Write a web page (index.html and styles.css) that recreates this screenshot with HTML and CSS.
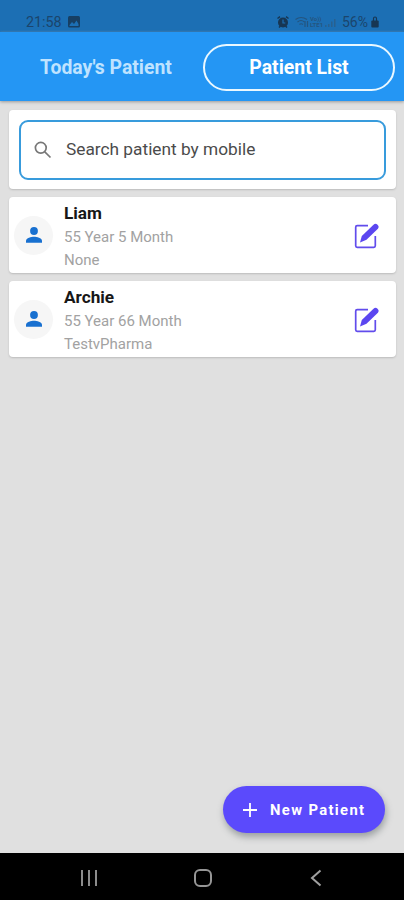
FILE: index.html
```html
<!DOCTYPE html>
<html lang="en">
<head>
<meta charset="utf-8">
<meta name="viewport" content="width=device-width">
<title>Patient List</title>
<link rel="stylesheet" href="styles.css">
</head>
<body>
<div class="status">
  <span class="time">21:58</span>
  <svg class="photo" width="12" height="12" viewBox="0 0 12 12"><rect width="12" height="11.5" rx="1.5" fill="#173f63"/><path d="M1.5 9 4 6l2 2 2.500-3.500L10.500 8v2h-9z" fill="#1c6fb4"/></svg>
  <span class="gap"></span>
  <svg class="alarm" width="12" height="12" viewBox="0 0 12 12"><circle cx="6" cy="6.500" r="5" fill="#173653"/><path d="M.5 2.500 3 .7M11.500 2.500 9 .7M2 11.500l1.500-1.500M10 11.500 8.500 10" stroke="#173653" stroke-width="1.500"/><path d="M6 3.500V7h2.300" fill="none" stroke="#1c6fb4" stroke-width="1.200"/></svg>
  <svg class="wifi" width="14" height="12" viewBox="0 0 14 12" fill="none" stroke="#24557f" stroke-width="1.200"><path d="M.5 3.500Q6 -.5 12 3.500M2.500 6Q6 3 9.500 6M4.500 8.500Q6 7 8 8.500"/><path d="M10 5v6M12.500 11V5"/></svg>
  <span class="volte"><span>Vo))</span><span>LTE1</span></span>
  <svg class="signal" width="13" height="12" viewBox="0 0 13 12" fill="#28618f"><path d="M0 9h1.500v2H0zM3 8h1.500v3H3zM6 5.500h1.500V11H6zM9 3h1.500v8H9z"/></svg>
  <span class="percent">56%</span>
  <svg class="battery" width="8" height="12" viewBox="0 0 8 12"><path d="M2.500 5V2.500a1.500 1.500 0 0 1 3 0V5" fill="none" stroke="#173653" stroke-width="1.200"/><rect x=".3" y="4.500" width="7.400" height="7" rx="1" fill="#173653"/></svg>
</div>
<nav class="tabs">
  <div class="tab">Today's Patient</div>
  <div class="tab active">Patient List</div>
</nav>
<main>
  <section class="card search">
    <div class="field">
      <svg width="18" height="18" viewBox="0 0 18 18" fill="none" stroke="#777" stroke-width="1.700"><circle cx="6.800" cy="6.800" r="5.400"/><path d="m10.800 10.800 5.700 5.700"/></svg>
      <span>Search patient by mobile</span>
    </div>
  </section>
  <section class="card patient">
    <div class="avatar"><svg width="16" height="16" viewBox="0 0 16 16" fill="#1870d0"><circle cx="8" cy="4" r="3.900"/><path d="M0 15.800v-2C0 11 5.300 9.800 8 9.800s8 1.200 8 4v2z"/></svg></div>
    <div class="info"><h2>Liam</h2><p>55 Year 5 Month</p><p>None</p></div>
    <svg class="edit" width="26" height="26" viewBox="0 0 26 26"><path d="M14 2.700H3.200Q1.700 2.700 1.700 4.200v18.600q0 1.500 1.500 1.500h16.600q1.500 0 1.500-1.500V13" fill="none" stroke="#614cec" stroke-width="1.700"/><path d="m6 19.500 1.800-6.500L19.500 1.700q2-1.700 4 0t.4 4L12.500 16.800z" fill="#5b46f0"/></svg>
  </section>
  <section class="card patient">
    <div class="avatar"><svg width="16" height="16" viewBox="0 0 16 16" fill="#1870d0"><circle cx="8" cy="4" r="3.900"/><path d="M0 15.800v-2C0 11 5.300 9.800 8 9.800s8 1.200 8 4v2z"/></svg></div>
    <div class="info"><h2>Archie</h2><p>55 Year 66 Month</p><p>TestvPharma</p></div>
    <svg class="edit" width="26" height="26" viewBox="0 0 26 26"><path d="M14 2.700H3.200Q1.700 2.700 1.700 4.200v18.600q0 1.500 1.500 1.500h16.600q1.500 0 1.500-1.500V13" fill="none" stroke="#614cec" stroke-width="1.700"/><path d="m6 19.500 1.800-6.500L19.500 1.700q2-1.700 4 0t.4 4L12.500 16.800z" fill="#5b46f0"/></svg>
  </section>
  <div class="fab"><svg width="14" height="14" viewBox="0 0 14 14" stroke="#fff" stroke-width="1.800"><path d="M7 0v14M0 7h14"/></svg><span>New Patient</span></div>
</main>
<footer class="nav">
  <svg width="18" height="18" viewBox="0 0 18 18" stroke="#8c8c8c" stroke-width="2"><path d="M2 1v16M9 1v16M16 1v16"/></svg>
  <svg class="home" width="20" height="20" viewBox="0 0 20 20" fill="none" stroke="#969696" stroke-width="2"><rect x="2" y="2" width="16" height="16" rx="5"/></svg>
  <svg width="12" height="18" viewBox="0 0 12 18" fill="none" stroke="#a0a0a0" stroke-width="2"><path d="M10.500 1.500 2 9l8.500 7.500"/></svg>
</footer>
</body>
</html>
```
FILE: styles.css
```css
* { box-sizing: border-box; }
body {
  margin: 0;
  width: 404px;
  height: 900px;
  display: flex;
  flex-direction: column;
  background: #e0e0e0;
  font-family: Roboto, sans-serif;
  overflow: hidden;
}
svg { display: block; flex: none; }
.status {
  height: 32px;
  padding: 12px 25px 0 26px;
  display: flex;
  align-items: center;
  background: #1c6fb4;
  color: #1b456c;
  font-size: 14.300px;
  white-space: nowrap;
}
.time { width: 37px; margin-right: 5px; }
.gap { flex: 1; }
.alarm { margin-right: 6px; }
.wifi { margin-right: 1px; }
.volte { display: flex; flex-direction: column; width: 15px; font-size: 6px; line-height: 6px; font-weight: 700; color: #24557f; }
.signal { margin-right: 4px; }
.percent { width: 29px; font-size: 14px; }
.tabs {
  height: 69px;
  padding: 12px 9px 10px;
  display: flex;
  background: #2496f4;
  box-shadow: 0 1px 3px #999;
}
.tab {
  width: 194px;
  padding-bottom: 1px;
  display: flex;
  align-items: center;
  justify-content: center;
  font-size: 19.400px;
  font-weight: 700;
  color: #bfe3ff;
  white-space: nowrap;
}
.active { width: 192px; color: #fff; border: 2px solid #eaf8ff; border-radius: 24px; }
main { height: 752px; padding: 9px 8px 0 9px; display: flex; flex-direction: column; gap: 8px; }
.card { background: #fff; border-radius: 4px; box-shadow: 0 1px 2px #bbb; }
.search { height: 79px; padding: 10px; }
.field {
  height: 60px;
  padding-left: 13px;
  display: flex;
  align-items: center;
  gap: 14px;
  border: 2px solid #389bdc;
  border-radius: 9px;
  color: #4b4b4b;
  font-size: 17.300px;
}
.field span { padding-bottom: 2px; }
.patient { height: 76px; padding: 0 16px 0 5px; display: flex; align-items: center; }
.avatar { width: 39px; height: 39px; border-radius: 50%; background: #f6f6f6; display: flex; align-items: center; justify-content: center; }
.info { flex: 1; height: 76px; padding: 4px 0 0 11px; }
.info h2 { margin: 0; font-size: 17.200px; line-height: 24px; font-weight: 700; color: #171717; }
.info p { margin: 0; font-size: 15px; line-height: 23px; color: #a2a2a2; }
.info h2 + p { padding-top: 1px; }
.edit { margin-top: 2px; }
.fab {
  margin: auto 11px 20px auto;
  width: 162px;
  height: 47px;
  padding-left: 20px;
  display: flex;
  align-items: center;
  gap: 13px;
  border-radius: 24px;
  background: #5b4afc;
  box-shadow: 1px 4px 7px #9a9fa0;
  color: #fff;
  font-size: 14.800px;
  font-weight: 700;
  letter-spacing: 1.350px;
  white-space: nowrap;
}
.nav {
  height: 47px;
  padding: 2px 82px 0 80px;
  display: flex;
  align-items: center;
  justify-content: space-between;
  background: #000;
}
.home { margin-right: 3px; }
```
